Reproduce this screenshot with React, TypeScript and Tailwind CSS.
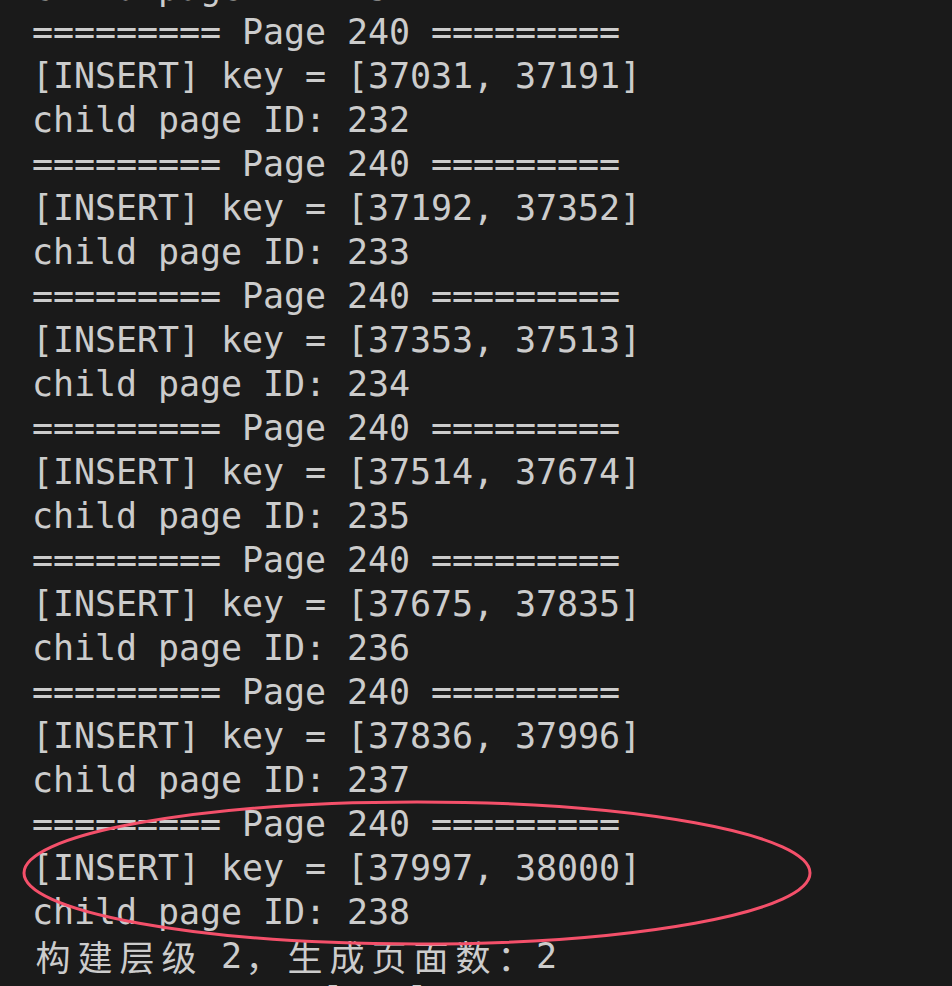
import React from "react";

const mono = {
  fontFamily: '"DejaVu Sans Mono", "Liberation Mono", "Noto Sans CJK SC", monospace',
};

type Line = string;

const lines: Line[] = [
  "child page ID: 231",
  "========= Page 240 =========",
  "[INSERT] key = [37031, 37191]",
  "child page ID: 232",
  "========= Page 240 =========",
  "[INSERT] key = [37192, 37352]",
  "child page ID: 233",
  "========= Page 240 =========",
  "[INSERT] key = [37353, 37513]",
  "child page ID: 234",
  "========= Page 240 =========",
  "[INSERT] key = [37514, 37674]",
  "child page ID: 235",
  "========= Page 240 =========",
  "[INSERT] key = [37675, 37835]",
  "child page ID: 236",
  "========= Page 240 =========",
  "[INSERT] key = [37836, 37996]",
  "child page ID: 237",
  "========= Page 240 =========",
  "[INSERT] key = [37997, 38000]",
  "child page ID: 238",
  "构建层级 2，生成页面数：2",
  "=========== t level 2",
];

function isWide(ch: string) {
  const c = ch.codePointAt(0) || 0;
  return c >= 0x2e80;
}

function TermLine({ text }: { text: string }) {
  const chars = Array.from(text);
  return (
    <div className="h-[44px] leading-[44px] whitespace-pre flex">
      {chars.map((ch, i) =>
        isWide(ch) ? (
          <span
            key={i}
            className="inline-block w-[42px] text-center"
            style={{ fontFamily: '"Noto Sans CJK SC", sans-serif' }}
          >
            {ch}
          </span>
        ) : (
          <span key={i} className="inline-block w-[21px]">
            {ch}
          </span>
        )
      )}
    </div>
  );
}

export default function App() {
  return (
    <div className="relative w-[952px] h-[986px] overflow-hidden bg-[#1a1a1a]">
      <div
        className="mt-[-34px] pl-[32px] text-[35px] text-[#cccccc]"
        style={mono}
      >
        {lines.map((l, i) => (
          <TermLine key={i} text={l} />
        ))}
      </div>
      <svg
        className="absolute left-0 top-0 pointer-events-none"
        width="952"
        height="986"
        viewBox="0 0 952 986"
      >
        <ellipse
          cx="417"
          cy="873"
          rx="393"
          ry="71"
          fill="none"
          stroke="#f4506a"
          strokeWidth="3"
        />
      </svg>
    </div>
  );
}
